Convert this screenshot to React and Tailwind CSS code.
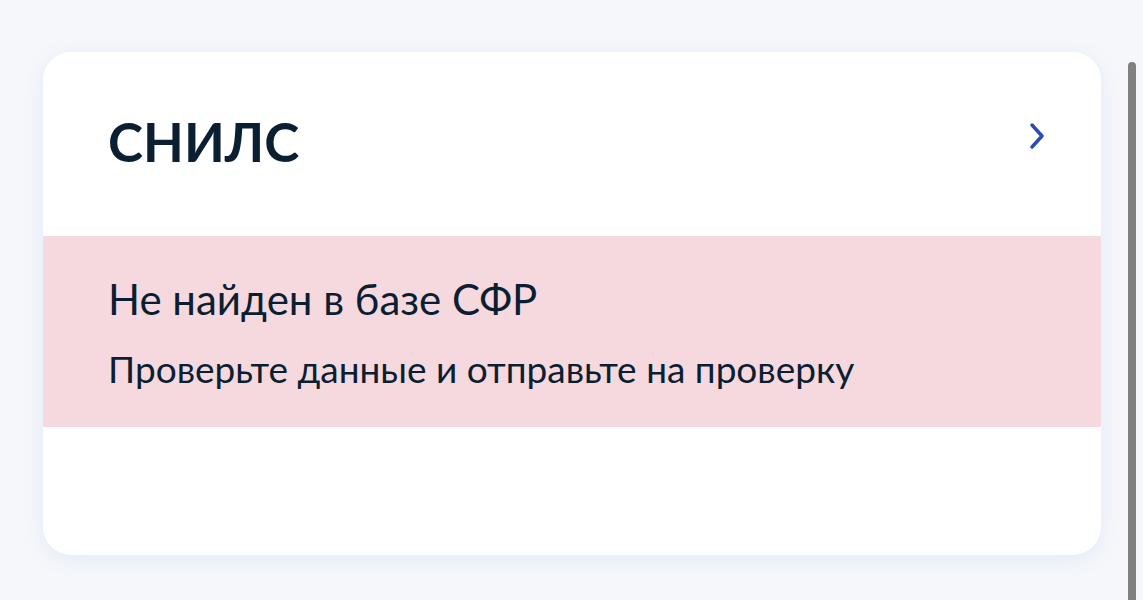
export default function App() {
  return (
    <div
      className="relative min-h-[600px] w-full overflow-hidden bg-[#f5f7fb]"
      style={{ fontFamily: "Lato, 'Noto Sans', sans-serif" }}
    >
      <div className="pl-[43px] pr-[42px] pt-[52px]">
        <div className="overflow-hidden rounded-[28px] bg-white shadow-[0_4px_20px_rgba(102,136,204,0.12)]">
          <div className="flex h-[184px] items-start justify-between pl-[65px] pr-[56px] pt-[58px]">
            <h2 className="text-[53px] font-bold leading-[64px] text-[#0b1f33]">СНИЛС</h2>
            <svg
              width="16"
              height="28"
              viewBox="0 0 16 28"
              fill="none"
              className="mt-[12px]"
            >
              <path
                d="M3 3 L13 14 L3 25"
                stroke="#2a4cb3"
                strokeWidth="3.5"
                strokeLinecap="round"
                strokeLinejoin="round"
              />
            </svg>
          </div>

          <div className="bg-[#f6d9de] pb-[36px] pl-[65px] pr-[56px] pt-[39px]">
            <p className="text-[42px] leading-[48px] text-[#0b1f33]">Не найден в базе СФР</p>
            <p className="mt-[24px] text-[37px] leading-[44px] text-[#0b1f33]">
              Проверьте данные и отправьте на проверку
            </p>
          </div>

          <div className="h-[128px]" />
        </div>
      </div>

      <div className="absolute right-[7px] top-[62px] h-[560px] w-[8px] rounded-full bg-[#808080]" />
    </div>
  );
}
